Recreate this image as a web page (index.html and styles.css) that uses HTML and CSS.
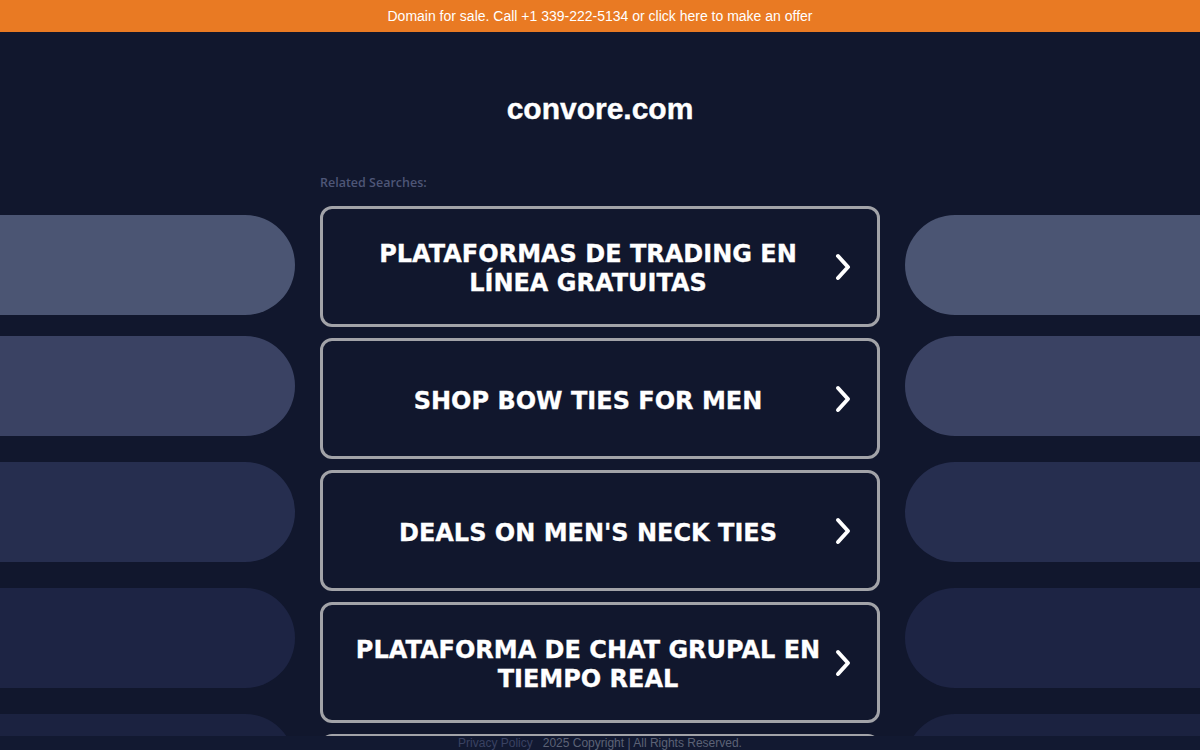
FILE: index.html
```html
<!DOCTYPE html>
<html lang="en">
<head>
<meta charset="utf-8">
<title>convore.com</title>
<link rel="stylesheet" href="styles.css">
</head>
<body>
<div class="topbar">Domain for sale. Call +1 339-222-5134 or click here to make an offer</div>
<header class="header"><h1 class="title">convore.com</h1></header>
<main class="layout">
  <div class="pills pills-left">
    <div class="pill p1"></div>
    <div class="pill p2"></div>
    <div class="pill p3"></div>
    <div class="pill p4"></div>
    <div class="pill p5"></div>
  </div>
  <section class="center">
    <div class="label">Related Searches:</div>
    <div class="links">
      <a class="link" href="#"><span class="link-text">PLATAFORMAS DE TRADING EN LÍNEA GRATUITAS</span><svg class="chev" viewBox="0 0 16 28" width="16" height="28"><polyline points="3,3 13,14 3,25" fill="none" stroke="#fff" stroke-width="4" stroke-linecap="round" stroke-linejoin="round"/></svg></a>
      <a class="link" href="#"><span class="link-text">SHOP BOW TIES FOR MEN</span><svg class="chev" viewBox="0 0 16 28" width="16" height="28"><polyline points="3,3 13,14 3,25" fill="none" stroke="#fff" stroke-width="4" stroke-linecap="round" stroke-linejoin="round"/></svg></a>
      <a class="link" href="#"><span class="link-text">DEALS ON MEN'S NECK TIES</span><svg class="chev" viewBox="0 0 16 28" width="16" height="28"><polyline points="3,3 13,14 3,25" fill="none" stroke="#fff" stroke-width="4" stroke-linecap="round" stroke-linejoin="round"/></svg></a>
      <a class="link" href="#"><span class="link-text">PLATAFORMA DE CHAT GRUPAL EN TIEMPO REAL</span><svg class="chev" viewBox="0 0 16 28" width="16" height="28"><polyline points="3,3 13,14 3,25" fill="none" stroke="#fff" stroke-width="4" stroke-linecap="round" stroke-linejoin="round"/></svg></a>
      <a class="link" href="#"><span class="link-text"></span><svg class="chev" viewBox="0 0 16 28" width="16" height="28"><polyline points="3,3 13,14 3,25" fill="none" stroke="#fff" stroke-width="4" stroke-linecap="round" stroke-linejoin="round"/></svg></a>
    </div>
  </section>
  <div class="pills pills-right">
    <div class="pill p1"></div>
    <div class="pill p2"></div>
    <div class="pill p3"></div>
    <div class="pill p4"></div>
    <div class="pill p5"></div>
  </div>
</main>
<footer class="footer"><a class="privacy" href="#">Privacy Policy</a><span class="copy">2025 Copyright | All Rights Reserved.</span></footer>
</body>
</html>
```

FILE: styles.css
```css
html, body {
  margin: 0;
  padding: 0;
  height: 750px;
  overflow: hidden;
}
body {
  background: #11172d;
  font-family: "Liberation Sans", Arial, sans-serif;
}
.topbar {
  height: 32px;
  line-height: 32px;
  background: #e97a23;
  color: #fff;
  font-size: 14px;
  text-align: center;
}
.header {
  padding-top: 59px;
}
.title {
  margin: 0;
  font-size: 30px;
  line-height: 36px;
  font-weight: bold;
  color: #fff;
  text-align: center;
  -webkit-text-stroke: 0.4px #fff;
}
.layout {
  display: grid;
  grid-template-columns: 295px 560px 295px;
  column-gap: 25px;
  padding-top: 49px;
}
.pills {
  display: flex;
  flex-direction: column;
  gap: 26px;
  padding-top: 39px;
}
.pill {
  height: 100px;
  flex: none;
}
.pills-left .pill { border-radius: 0 50px 50px 0; }
.pills-right .pill { border-radius: 50px 0 0 50px; }
.pill.p1 { background: #4b5573; margin-bottom: -5px; }
.pill.p2 { background: #3a4263; }
.pill.p3 { background: #262e4f; }
.pill.p4 { background: #1d2444; }
.pill.p5 { background: #1b2240; }
.label {
  font-family: "Open Sans", "Liberation Sans", sans-serif;
  font-weight: 600;
  font-size: 12.5px;
  line-height: 14px;
  color: #4e5677;
  margin-bottom: 16px;
}
.links {
  display: flex;
  flex-direction: column;
  gap: 11px;
}
.link {
  box-sizing: border-box;
  height: 121px;
  border: 3px solid #a2a3a8;
  border-radius: 12px;
  display: flex;
  align-items: center;
  padding: 0 26px 0 30px;
  text-decoration: none;
  color: #fff;
}
.link-text {
  flex: 1;
  text-align: center;
  font-family: "DejaVu Sans", Verdana, sans-serif;
  font-weight: bold;
  font-size: 24px;
  line-height: 29px;
  padding-top: 5px;
  -webkit-text-stroke: 0.3px #fff;
}
.chev {
  flex: none;
  margin-left: 12px;
}
.footer {
  position: fixed;
  left: 0;
  right: 0;
  bottom: 0;
  height: 14px;
  line-height: 14px;
  background: #121931;
  text-align: center;
  font-size: 12px;
}
.privacy {
  color: #3a4262;
  text-decoration: none;
  margin-right: 10px;
}
.copy {
  color: #5c6276;
}
```
